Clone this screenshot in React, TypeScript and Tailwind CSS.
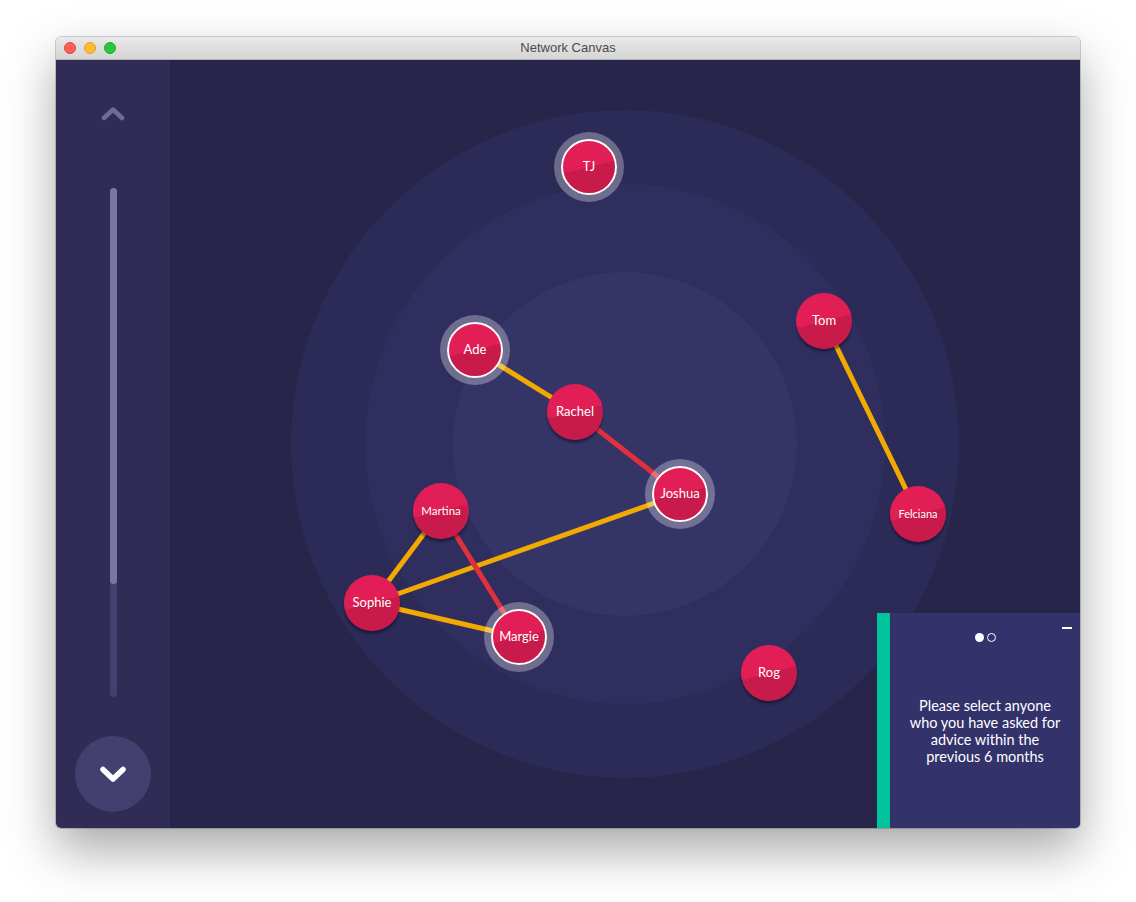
import React from "react";

type N = { name: string; x: number; y: number; sel?: boolean; fs: string };

const nodes: N[] = [
  { name: "TJ", x: 419, y: 107, sel: true, fs: "text-[13px]" },
  { name: "Ade", x: 305, y: 290, sel: true, fs: "text-[13px]" },
  { name: "Rachel", x: 405, y: 352, fs: "text-[13px]" },
  { name: "Joshua", x: 510, y: 434, sel: true, fs: "text-[13px]" },
  { name: "Martina", x: 271, y: 451, fs: "text-[11.5px]" },
  { name: "Sophie", x: 202, y: 543, fs: "text-[13px]" },
  { name: "Margie", x: 349, y: 577, sel: true, fs: "text-[13px]" },
  { name: "Tom", x: 654, y: 261, fs: "text-[13px]" },
  { name: "Felciana", x: 748, y: 454, fs: "text-[11px]" },
  { name: "Rog", x: 599, y: 613, fs: "text-[13px]" },
];

const pos = (n: string) => nodes.find((k) => k.name === n)!;

const edges: [string, string, string][] = [
  ["Ade", "Rachel", "#f2a900"],
  ["Rachel", "Joshua", "#e1303d"],
  ["Joshua", "Sophie", "#f2a900"],
  ["Martina", "Sophie", "#f2a900"],
  ["Martina", "Margie", "#e1303d"],
  ["Sophie", "Margie", "#f2a900"],
  ["Tom", "Felciana", "#f2a900"],
];

function Node({ n }: { n: N }) {
  return (
    <div
      className={
        "absolute w-14 h-14 rounded-full flex items-center justify-center text-white bg-[linear-gradient(166deg,#e11e55_50%,#c81a4b_50%)] " +
        n.fs +
        (n.sel
          ? " border-2 border-white shadow-[0_0_0_7px_rgba(255,255,255,0.3)]"
          : " shadow-[0_3px_2px_rgba(10,8,30,0.45)]")
      }
      style={{ left: n.x - 28, top: n.y - 28, fontFamily: "Lato, 'Noto Sans', sans-serif" }}
    >
      {n.name}
    </div>
  );
}

export default function App() {
  return (
    <div className="w-[1136px] h-[902px] bg-white pl-[56px] pt-[37px]">
      <div className="w-[1024px] h-[791px] rounded-[5px] overflow-hidden flex flex-col shadow-[0_0_0_1px_rgba(0,0,0,0.18),0_22px_50px_rgba(0,0,0,0.35)]">
        {/* title bar */}
        <div className="h-[23px] shrink-0 bg-[linear-gradient(#e9e9e9,#d5d5d5)] border-b border-[#b4b4b4] flex items-center px-[8px] relative">
          <div className="flex gap-[8px]">
            <span className="w-3 h-3 rounded-full bg-[#fe5f57] border border-[#e1463f]" />
            <span className="w-3 h-3 rounded-full bg-[#febc2e] border border-[#dea124]" />
            <span className="w-3 h-3 rounded-full bg-[#28c840] border border-[#1fa92f]" />
          </div>
          <div
            className="flex-1 text-center text-[13px] text-[#4b4b4b] pr-[52px]"
            style={{ fontFamily: "'Liberation Sans', 'Noto Sans', sans-serif" }}
          >
            Network Canvas
          </div>
        </div>
        {/* content */}
        <div className="flex flex-1 min-h-0">
          {/* sidebar */}
          <div className="w-[114px] shrink-0 bg-[#302c55] flex flex-col items-center pt-[41px] pb-[15px]">
            <svg width="24" height="24" viewBox="0 0 24 24">
              <path d="M3 17 L12 8.5 L21 17" fill="none" stroke="#6f6b98" strokeWidth="4.5" strokeLinecap="round" strokeLinejoin="round" />
            </svg>
            <div className="mt-[63px] w-[7px] h-[509px] rounded-full bg-[#433f6e] flex flex-col">
              <div className="h-[396px] rounded-full bg-[#7b77a2]" />
            </div>
            <div className="mt-[39px] w-[76px] h-[76px] rounded-full bg-[#433f6f] flex items-center justify-center">
              <svg width="32" height="32" viewBox="0 0 32 32">
                <path d="M6 11.5 L16 21 L26 11.5" fill="none" stroke="#ffffff" strokeWidth="5.5" strokeLinecap="round" strokeLinejoin="round" />
              </svg>
            </div>
          </div>
          {/* canvas */}
          <div className="relative flex-1 bg-[#27254a] overflow-hidden">
            <svg className="absolute inset-0" width="910" height="768">
              <circle cx="455" cy="384" r="334" fill="#2c2a56" />
              <circle cx="455" cy="384" r="260" fill="#302e5e" />
              <circle cx="455" cy="384" r="172" fill="#353467" />
              {edges.map(([a, b, c], i) => {
                const p = pos(a);
                const q = pos(b);
                return <line key={i} x1={p.x} y1={p.y} x2={q.x} y2={q.y} stroke={c} strokeWidth="5" />;
              })}
            </svg>
            {nodes.map((n) => (
              <Node key={n.name} n={n} />
            ))}
            {/* prompt panel */}
            <div className="absolute left-[707px] top-[553px] w-[203px] h-[215px] flex bg-[#34326a]">
              <div className="w-[13px] bg-[#00c49b]" />
              <div className="flex-1 relative flex flex-col items-center pt-[20px]">
                <div className="absolute right-[8px] top-[14px] w-[10px] h-[1.5px] bg-white" />
                <div className="flex gap-[3px]">
                  <span className="w-[9px] h-[9px] rounded-full bg-white" />
                  <span className="w-[9px] h-[9px] rounded-full border-[1.5px] border-white" />
                </div>
                <div
                  className="mt-[55px] text-center text-white text-[14.5px] leading-[17px]"
                  style={{ fontFamily: "Lato, 'Noto Sans', sans-serif" }}
                >
                  Please select anyone
                  <br />
                  who you have asked for
                  <br />
                  advice within the
                  <br />
                  previous 6 months
                </div>
              </div>
            </div>
          </div>
        </div>
      </div>
    </div>
  );
}
